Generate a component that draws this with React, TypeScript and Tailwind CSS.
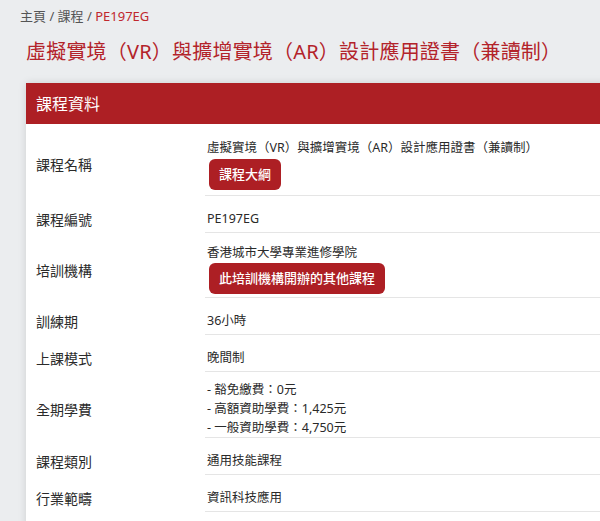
import React from 'react';

const font = { fontFamily: '"Noto Sans", "Noto Sans CJK TC", sans-serif' };

type Row = {
  label: string;
  pad: string;
  content: React.ReactNode;
};

const Button = ({ children, className = '' }: { children: React.ReactNode; className?: string }) => (
  <button className={`h-[31px] px-[10px] rounded-md bg-[#ad1f24] text-white text-[13px] font-medium leading-none ${className}`}>
    {children}
  </button>
);

const rows: Row[] = [
  {
    label: '課程名稱',
    pad: 'pt-[14px] pb-[5px]',
    content: (
      <>
        <div>虛擬實境（VR）與擴增實境（AR）設計應用證書（兼讀制）</div>
        <Button className="mt-[2px] ml-[2px]">課程大綱</Button>
      </>
    ),
  },
  { label: '課程編號', pad: 'pt-[13px] pb-[4px]', content: <div>PE197EG</div> },
  {
    label: '培訓機構',
    pad: 'pt-[10px] pb-[3px]',
    content: (
      <>
        <div>香港城市大學專業進修學院</div>
        <Button className="mt-[1px] ml-[2px]">此培訓機構開辦的其他課程</Button>
      </>
    ),
  },
  { label: '訓練期', pad: 'pt-[13px] pb-[4px]', content: <div>36小時</div> },
  { label: '上課模式', pad: 'pt-[13px] pb-[4px]', content: <div>晚間制</div> },
  {
    label: '全期學費',
    pad: 'pt-[8px] pb-0',
    content: (
      <>
        <div>- 豁免繳費：0元</div>
        <div>- 高額資助學費：1,425元</div>
        <div>- 一般資助學費：4,750元</div>
      </>
    ),
  },
  { label: '課程類別', pad: 'pt-[13px] pb-[4px]', content: <div>通用技能課程</div> },
  { label: '行業範疇', pad: 'pt-[13px] pb-[4px]', content: <div>資訊科技應用</div> },
];

export default function App() {
  return (
    <div className="w-full h-[521px] overflow-hidden bg-[#ebedef]" style={font}>
      {/* Breadcrumb */}
      <div className="pl-[20px] pt-[7px] text-[13px] leading-[18px] text-[#555]">
        主頁 / 課程 / <span className="text-[#c0272d]">PE197EG</span>
      </div>

      {/* Title */}
      <h1 className="pl-[26px] mt-[13px] text-[20px] tracking-[0.2px] leading-[28px] font-normal text-[#b3232a] whitespace-nowrap">
        虛擬實境（VR）與擴增實境（AR）設計應用證書（兼讀制）
      </h1>

      {/* Card */}
      <div className="ml-[26px] mt-[17px] w-[640px] bg-white shadow-[0_0_8px_rgba(0,0,0,0.12)]">
        <div className="h-[41px] flex items-center px-[10px] bg-[#ad1f24] text-white text-[16px]">
          課程資料
        </div>
        <div className="pl-[10px] pb-[20px]">
          {rows.map((row) => (
            <div key={row.label} className="flex items-center">
              <div className="w-[169px] shrink-0 pt-[10px] text-[14px] leading-[20px] text-[#2a2a2a]">
                {row.label}
              </div>
              <div className={`flex-1 border-b border-[#e5e5e5] pl-[2px] text-[12.5px] leading-[19px] text-[#2a2a2a] ${row.pad}`}>
                {row.content}
              </div>
            </div>
          ))}
        </div>
      </div>
    </div>
  );
}
